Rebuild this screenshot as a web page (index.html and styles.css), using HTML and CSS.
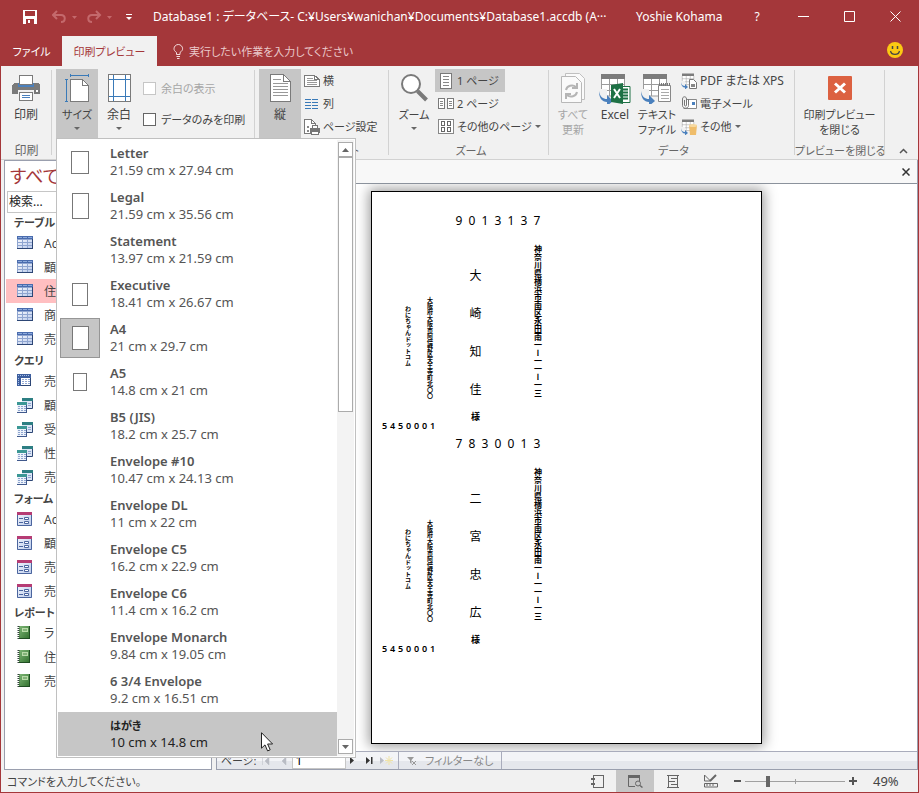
FILE: index.html
```html
<!DOCTYPE html>
<html lang="ja">
<head>
<meta charset="utf-8">
<title>Database1</title>
<link rel="stylesheet" href="styles.css">
</head>
<body>
<svg class="defs" aria-hidden="true">
  <defs>
    <linearGradient id="blue" x1="0" y1="0" x2="1" y2="1"><stop offset="0" stop-color="#f4f7fd"/><stop offset="1" stop-color="#b9c9ea"/></linearGradient>
    <linearGradient id="green" x1="0" y1="0" x2="1" y2="1"><stop offset="0" stop-color="#7fb877"/><stop offset="1" stop-color="#2f6e2c"/></linearGradient>
    <symbol id="table" viewBox="0 0 16 15">
      <rect width="16" height="13" fill="#8fa5d0"/><rect x="0" y="0" width="16" height="3" fill="#4a6cae"/>
      <path d="M1 4h4v2H1zM6 4h4v2H6zM11 4h4v2h-4zM1 7h4v2H1zM6 7h4v2H6zM11 7h4v2h-4zM1 10h4v2H1zM6 10h4v2H6zM11 10h4v2h-4z" fill="url(#blue)"/>
      <path d="M1 1.500h4M6 1.500h4M11 1.500h4" stroke="#8eabdc"/><path d="M0 12.500h16M15.500 3v10" stroke="#2d4675"/>
    </symbol>
    <symbol id="cross" viewBox="0 0 16 15">
      <rect x="0" y="0" width="14" height="12" fill="#fff"/><rect width="14" height="4" fill="#3d5f9f"/><rect width="4" height="12" fill="#3d5f9f"/>
      <path d="M1 1.500h12M1.500 4v7" stroke="#a9c0e8" stroke-dasharray="1 1"/><path d="M5 5.500h8M5 7.500h8M5 9.500h8" stroke="#93a9d4" stroke-dasharray="2 1"/><path d="M4 11.500h10M13.500 4v8" stroke="#2d4675"/>
    </symbol>
    <symbol id="query" viewBox="0 0 16 15">
      <rect x="5" y="0" width="11" height="10" fill="#dce6f6"/><path d="M5 1.500h11" stroke="#2d7f83" stroke-width="3"/><path d="M7 5.500h8M7 7.500h8" stroke="#8ea5cf" stroke-dasharray="3 1"/><path d="M15.500 3v7.500H9" fill="none" stroke="#2d4675"/>
      <rect x="0" y="4" width="10" height="10" fill="#eef3fb"/><path d="M0 5.500h10" stroke="#3b9795" stroke-width="3"/><path d="M1 8.500h8M1 10.500h8M1 12.500h8" stroke="#8ea5cf" stroke-dasharray="2 1"/><path d="M0 14.500h10M9.500 7v7" stroke="#40598c"/>
    </symbol>
    <symbol id="form" viewBox="0 0 16 15">
      <rect width="15" height="14" fill="url(#blue)"/><rect width="15" height="3" fill="#b63c74"/><path d="M.5 3v10.500h14V3" fill="none" stroke="#4b659e"/>
      <path d="M2 6.500h4M2 10.500h4M7.500 5.500h4v2h-4zM7.500 9.500h4v2h-4z" fill="#fff" stroke="#4b659e"/>
    </symbol>
    <symbol id="report" viewBox="0 0 16 15">
      <rect x="2" width="11" height="13" fill="url(#green)"/><path d="M1.500 0v13" stroke="#33433a" stroke-width="2" stroke-dasharray="1 1"/><path d="M12.500 0v13M2 12.500h11" stroke="#1f4d22"/><rect x="5" y="2" width="6" height="4" fill="#b9dba9"/><path d="M6 4h4" stroke="#4f8b4a"/>
    </symbol>
    <symbol id="export" viewBox="0 0 32 32">
      <path d="M2 1h24v5H2z" fill="#7c7c7c"/><path d="M2.500 6v17h23V6M2 11.500h24M2 17.500h24M10.500 6v17M18.500 6v17" fill="#fff" stroke="#9b9b9b"/>
      <path d="M0 16h8v12H0z" fill="#f1f1f1"/><path d="M0 18c1 6 4 8 8 8v-4l6 6-6 5v-4C3 29 0 25 0 18z" fill="#4a80bd"/>
    </symbol>
  </defs>
</svg>

<div class="window">
  <header class="titlebar">
    <div class="quick">
      <button class="plain" aria-label="上書き保存"><svg width="14" height="14" shape-rendering="crispEdges"><path d="M0 0h14v14H0z" fill="#fff"/><path d="M2 1h10v5H2zM3 9h8v5H3z" fill="#a4373a"/><path d="M5 10h2v3H5z" fill="#fff"/></svg></button>
      <button class="plain dim" aria-label="元に戻す"><svg width="26" height="14"><path d="M5 1L1 5l4 4M1.500 5H9c5 0 5 7 0 7" fill="none" stroke="currentColor" stroke-width="2"/><path d="M20 6h5l-2.500 3z" fill="currentColor"/></svg></button>
      <button class="plain dim" aria-label="やり直し"><svg width="26" height="14"><path d="M9 1l4 4-4 4M12.500 5H5c-5 0-5 7 0 7" fill="none" stroke="currentColor" stroke-width="2"/><path d="M20 6h5l-2.500 3z" fill="currentColor"/></svg></button>
      <button class="plain" aria-label="カスタマイズ"><svg width="6" height="8"><path d="M0 1.500h6" stroke="#fff"/><path d="M0 4h6L3 7z" fill="#fff"/></svg></button>
    </div>
    <h1 class="title">Database1 : データベース- C:¥Users¥wanichan¥Documents¥Database1.accdb (A···</h1>
    <span class="user">Yoshie Kohama</span>
    <button class="winbtn">?</button>
    <button class="winbtn" aria-label="最小化"><svg width="11" height="11"><path d="M0 5.500h11" stroke="#fff"/></svg></button>
    <button class="winbtn" aria-label="最大化"><svg width="11" height="11"><path d="M.5.5h10v10H.5z" fill="none" stroke="#fff"/></svg></button>
    <button class="winbtn" aria-label="閉じる"><svg width="11" height="11"><path d="M.5.5l10 10M10.500.5l-10 10" stroke="#fff"/></svg></button>
  </header>

  <nav class="tabs">
    <button class="tab">ファイル</button>
    <button class="tab active">印刷プレビュー</button>
    <button class="tell"><svg width="11" height="15"><path d="M3.500 10.500v-2C1.500 7 1 6 1 4.800a4.300 4.300 0 0 1 8.600 0C9.600 6 9 7 7 8.500v2zM3.500 12.500h3.500M4 14.500h2.500" fill="none" stroke="#f3dcdc"/></svg>実行したい作業を入力してください</button>
    <svg class="smile" width="16" height="16"><circle cx="8" cy="8" r="8" fill="#fbc913"/><path d="M5.500 4v3M10.500 4v3" stroke="#444" stroke-width="1.500"/><path d="M3.500 9c1 4.500 8 4.500 9 0" fill="none" stroke="#444" stroke-width="1.200"/></svg>
  </nav>

  <div class="ribbon">
    <section class="group g-print">
      <div class="gbody">
        <button class="large"><span class="ico"><svg width="28" height="26" shape-rendering="crispEdges"><path d="M2 8h24l2 2v9H0v-9z" fill="#7a7a7a"/><path d="M6 8h16v4H6z" fill="#4a80bd"/><path d="M7.500.5h13v9h-13z" fill="#fff" stroke="#7a7a7a"/><path d="M6 15h16v4H6z" fill="#f1f1f1"/><path d="M7.500 17.500h13v8h-13z" fill="#fff" stroke="#7a7a7a"/><path d="M10 20.500h8M10 22.500h8" stroke="#4a80bd"/><path d="M24 15h2v2h-2z" fill="#fff"/></svg></span>印刷</button>
      </div>
      <div class="glabel">印刷</div>
    </section>

    <section class="group g-size">
      <div class="gbody">
        <div class="drop">
          <button class="large on"><span class="ico"><svg width="25" height="28" shape-rendering="crispEdges"><path d="M6 1.500h18M5.500 0v3M23.500 0v3M1.500 5v22M0 5.500h3M0 27.500h3" stroke="#3a7ab8" fill="none"/><path d="M5.500 5.500h12l6 6v16h-18z" fill="#fff" stroke="#7a7a7a"/><path d="M17.500 5.500v6h6" fill="none" stroke="#7a7a7a"/></svg></span>サイズ<i class="caret"></i></button>
          <div class="menu">
            <ul class="sizes">
              <li><span class="thumb"><i class="sheet letter"></i></span><span><b>Letter</b><br>21.59 cm x 27.94 cm</span></li>
              <li><span class="thumb"><i class="sheet legal"></i></span><span><b>Legal</b><br>21.59 cm x 35.56 cm</span></li>
              <li><span class="thumb"></span><span><b>Statement</b><br>13.97 cm x 21.59 cm</span></li>
              <li><span class="thumb"><i class="sheet exec"></i></span><span><b>Executive</b><br>18.41 cm x 26.67 cm</span></li>
              <li><span class="thumb current"><i class="sheet a4"></i></span><span><b>A4</b><br>21 cm x 29.7 cm</span></li>
              <li><span class="thumb"><i class="sheet a5"></i></span><span><b>A5</b><br>14.8 cm x 21 cm</span></li>
              <li><span class="thumb"></span><span><b>B5 (JIS)</b><br>18.2 cm x 25.7 cm</span></li>
              <li><span class="thumb"></span><span><b>Envelope #10</b><br>10.47 cm x 24.13 cm</span></li>
              <li><span class="thumb"></span><span><b>Envelope DL</b><br>11 cm x 22 cm</span></li>
              <li><span class="thumb"></span><span><b>Envelope C5</b><br>16.2 cm x 22.9 cm</span></li>
              <li><span class="thumb"></span><span><b>Envelope C6</b><br>11.4 cm x 16.2 cm</span></li>
              <li><span class="thumb"></span><span><b>Envelope Monarch</b><br>9.84 cm x 19.05 cm</span></li>
              <li><span class="thumb"></span><span><b>6 3/4 Envelope</b><br>9.2 cm x 16.51 cm</span></li>
              <li class="hover"><span class="thumb"></span><span><b class="kana">はがき</b><br>10 cm x 14.8 cm</span><svg class="cursor" width="13" height="20"><path d="M.5.700v15.500l3.500-3.300 2.600 6 2.600-1.100-2.600-5.800h5z" fill="#fff" stroke="#222"/></svg></li>
            </ul>
            <div class="scroll">
              <span class="arrow"><svg width="7" height="4"><path d="M0 4h7L3.500 0z" fill="#666"/></svg></span>
              <span class="grip"></span>
              <span class="arrow end"><svg width="7" height="4"><path d="M0 0h7L3.500 4z" fill="#666"/></svg></span>
            </div>
          </div>
        </div>
        <button class="large"><span class="ico"><svg width="23" height="28" shape-rendering="crispEdges"><path d="M.5.5h22v27H.5z" fill="#fff" stroke="#7a7a7a"/><path d="M5.500 1v26M17.500 1v26M1 5.500h21M1 22.500h21" stroke="#3a7ab8"/></svg></span>余白<i class="caret"></i></button>
        <div class="checks">
          <label class="off"><input type="checkbox" disabled>余白の表示</label>
          <label><input type="checkbox">データのみを印刷</label>
        </div>
      </div>
    </section>

    <section class="group g-layout">
      <div class="gbody">
        <button class="large on"><span class="ico"><svg width="21" height="28" shape-rendering="crispEdges"><path d="M.5.5h13l7 7v20H.5z" fill="#fff" stroke="#7a7a7a"/><path d="M13.500.5v7h7" fill="none" stroke="#7a7a7a"/><path d="M3 5.500h8M3 9.500h15M3 12.500h15M3 15.500h15M3 18.500h15M3 21.500h15" stroke="#999"/></svg></span>縦</button>
        <div class="rows">
          <button class="small"><svg width="16" height="16" shape-rendering="crispEdges"><path d="M.5 2.500h10l5 4v7H.5z" fill="#fff" stroke="#7a7a7a"/><path d="M10.500 2.500v4h5" fill="none" stroke="#7a7a7a"/><path d="M3 5.500h6M3 7.500h10M3 9.500h10M3 11.500h10" stroke="#999"/></svg>横</button>
          <button class="small"><svg width="16" height="16" shape-rendering="crispEdges"><path d="M1 3.500h6M1 6.500h6M1 9.500h6M1 12.500h6M8 3.500h6M8 6.500h6M8 9.500h6M8 12.500h6" stroke="#3a7ab8"/></svg>列</button>
          <button class="small"><svg width="16" height="16" shape-rendering="crispEdges"><path d="M.5.5h7l4 4v10H.5z" fill="#fff" stroke="#7a7a7a"/><path d="M7.500.5v4h4" fill="none" stroke="#7a7a7a"/><path d="M3 7h2v2H3zM3 11h2v2H3z" fill="#888"/><path d="M6 9h10v5H6zM8 6h6v3H8z" fill="#777"/><path d="M9 7h4v2H9zM8 12h6v3H8z" fill="#fff"/><path d="M7.500 12.500h7v3h-7z" fill="none" stroke="#777"/></svg>ページ設定</button>
        </div>
      </div>
      <div class="glabel">ページ レイアウト</div>
    </section>

    <section class="group g-zoom">
      <div class="gbody">
        <button class="large"><span class="ico"><svg width="28" height="28"><circle cx="11" cy="10" r="9" fill="#fff" stroke="#7a7a7a" stroke-width="2"/><path d="M17.500 17l9 9" stroke="#7a7a7a" stroke-width="4"/></svg></span>ズーム<i class="caret"></i></button>
        <div class="rows">
          <button class="small on"><svg width="16" height="16" shape-rendering="crispEdges"><path d="M2.500.5h11v15h-11z" fill="#fff" stroke="#7a7a7a"/><path d="M5 3.500h6M5 6.500h6M5 9.500h6M5 12.500h6" stroke="#888"/></svg>1 ページ</button>
          <button class="small"><svg width="16" height="16" shape-rendering="crispEdges"><path d="M.5 2.500h6v10h-6zM9.500 2.500h6v10h-6z" fill="#fff" stroke="#7a7a7a"/><path d="M2 5.500h3M2 7.500h3M2 9.500h3M11 5.500h3M11 7.500h3M11 9.500h3" stroke="#888"/></svg>2 ページ</button>
          <button class="small"><svg width="16" height="16" shape-rendering="crispEdges"><path d="M.5.5h15v14H.5z" fill="#fff" stroke="#888"/><path d="M3.500 2.500h3v4h-3zM9.500 2.500h3v4h-3zM3.500 8.500h3v4h-3zM9.500 8.500h3v4h-3z" fill="none" stroke="#666"/></svg>その他のページ<i class="caret"></i></button>
        </div>
      </div>
      <div class="glabel">ズーム</div>
    </section>

    <section class="group g-data">
      <div class="gbody">
        <button class="large off"><span class="ico"><svg width="25" height="31"><path d="M4.500 5V.5h14l5 5v21H20" fill="#fafafa" stroke="#c0c0c0"/><path d="M.5 3.500h14l6 6v20H.5z" fill="#fafafa" stroke="#b8b8b8"/><path d="M5 17a6 5.500 0 0 1 10-3M16 10v5h-5M16 19a6 5.500 0 0 1-10 3M5 26v-5h5" fill="none" stroke="#b5b5b5" stroke-width="2"/></svg></span>すべて<br>更新</button>
        <button class="large"><span class="ico"><svg width="32" height="31"><use href="#export" width="32" height="32"/><path d="M21 13.500h10v16H21z" fill="#fff" stroke="#1e7145"/><path d="M23 16.500h6M23 19.500h6M23 22.500h6M23 25.500h6" stroke="#1e7145" stroke-width="2"/><path d="M12 12l12-2v21l-12-2z" fill="#1e7145"/><path d="M15 16l6 9M21 16l-6 9" stroke="#fff" stroke-width="2"/></svg></span><span class="latin">Excel</span></button>
        <button class="large"><span class="ico"><svg width="32" height="31"><use href="#export" width="32" height="32"/><path d="M17.500 12.500h12v16h-12z" fill="#fff" stroke="#888"/><path d="M20 16.500h8M20 19.500h8M20 22.500h8M20 25.500h8" stroke="#aaa"/><path d="M18 11.500h12" stroke="#777" stroke-width="3" stroke-dasharray="1 1"/></svg></span>テキスト<br>ファイル</button>
        <div class="rows">
          <button class="small latin"><svg width="16" height="16"><use href="#export" width="16" height="16"/><path d="M8.500 6.500h4l3 3v6h-7z" fill="#fff" stroke="#777"/><path d="M10 11h4v3h-4z" fill="#888"/></svg>PDF または XPS</button>
          <button class="small"><svg width="16" height="16"><path d="M5.500 3.500h10v9h-13" fill="#fff" stroke="#888"/><path d="M11 6h3v3h-3z" fill="#4a80bd"/><path d="M3.500 4v5c0 1.500 2 1.500 2 0V3c0-3-4-3-4 0v6.500c0 3.500 6 3.500 6 0V3" fill="none" stroke="#777"/></svg>電子メール</button>
          <button class="small"><svg width="16" height="16"><use href="#export" width="16" height="16"/><path d="M8 6h8l-1 10H9z" fill="#efbd6b"/><ellipse cx="12" cy="6.500" rx="4" ry="1.500" fill="#f7d99f"/></svg>その他<i class="caret"></i></button>
        </div>
      </div>
      <div class="glabel">データ</div>
    </section>

    <section class="group g-close">
      <div class="gbody">
        <button class="large wide"><span class="ico"><svg width="24" height="24"><rect width="24" height="24" rx="1" fill="#dc6141"/><path d="M7 7.500l10 9M17 7.500l-10 9" stroke="#fff" stroke-width="3"/></svg></span>印刷プレビュー<br>を閉じる</button>
      </div>
      <div class="glabel">プレビューを閉じる</div>
    </section>
    <button class="plain collapse" aria-label="リボンを折りたたむ"><svg width="9" height="6"><path d="M1 5l3.500-3.500L8 5" fill="none" stroke="#555" stroke-width="1.500"/></svg></button>
  </div>

  <div class="dock">
    <aside class="objects">
      <h2>すべて</h2>
      <input class="search" type="text" placeholder="検索..." aria-label="検索">
      <h3>テーブル</h3>
      <ul>
        <li><svg><use href="#table"/></svg>Ac</li>
        <li><svg><use href="#table"/></svg>顧</li>
        <li class="picked"><svg><use href="#table"/></svg>住</li>
        <li><svg><use href="#table"/></svg>商</li>
        <li><svg><use href="#table"/></svg>売</li>
      </ul>
      <h3>クエリ</h3>
      <ul>
        <li><svg><use href="#cross"/></svg>売</li>
        <li><svg><use href="#query"/></svg>顧</li>
        <li><svg><use href="#query"/></svg>受</li>
        <li><svg><use href="#query"/></svg>性</li>
        <li><svg><use href="#query"/></svg>売</li>
      </ul>
      <h3>フォーム</h3>
      <ul>
        <li><svg><use href="#form"/></svg>Ac</li>
        <li><svg><use href="#form"/></svg>顧</li>
        <li><svg><use href="#form"/></svg>売</li>
        <li><svg><use href="#form"/></svg>売</li>
      </ul>
      <h3>レポート</h3>
      <ul>
        <li><svg><use href="#report"/></svg>ラ</li>
        <li><svg><use href="#report"/></svg>住</li>
        <li><svg><use href="#report"/></svg>売</li>
      </ul>
    </aside>

    <main class="document">
      <div class="doctabs"><button class="plain" aria-label="閉じる"><svg width="8" height="8"><path d="M.5.5l7 7M7.500.5l-7 7" stroke="#333" stroke-width="1.500"/></svg></button></div>
      <div class="preview">
        <article class="page">
          <section class="card">
            <p class="zip"><span>9</span><span>0</span><span>1</span><span>3</span><span>1</span><span>3</span><span>7</span></p>
            <p class="from">わにちゃんドットコム</p>
            <p class="fromaddr">大阪府大阪市阿倍野区天王寺町北〇〇</p>
            <div class="to"><span>大</span><span>崎</span><span>知</span><span>佳</span><small>様</small></div>
            <p class="toaddr">神奈川県横浜市南区永田南一ー一一ー一三</p>
            <p class="fromzip"><span>5</span><span>4</span><span>5</span><span>0</span><span>0</span><span>0</span><span>1</span></p>
          </section>
          <section class="card">
            <p class="zip"><span>7</span><span>8</span><span>3</span><span>0</span><span>0</span><span>1</span><span>3</span></p>
            <p class="from">わにちゃんドットコム</p>
            <p class="fromaddr">大阪府大阪市阿倍野区天王寺町北〇〇</p>
            <div class="to"><span>二</span><span>宮</span><span>忠</span><span>広</span><small>様</small></div>
            <p class="toaddr">神奈川県横浜市南区永田南一ー一一ー一三</p>
            <p class="fromzip"><span>5</span><span>4</span><span>5</span><span>0</span><span>0</span><span>0</span><span>1</span></p>
          </section>
        </article>
      </div>
      <div class="record">
        <label class="pager">ページ:
          <svg width="30" height="8"><path d="M.5 0v8M7 0v8L3 4zM24 0v8l-4-4z" fill="#b9bcc4" stroke="#b9bcc4" stroke-width=".5"/></svg>
          <input type="text" value="1"></label>
        <svg class="steps" width="44" height="9"><path d="M0 1v7l4-3.500zM16 1v7l4-3.500zM21 1h1.500v7H21z" fill="#333"/><path d="M30 1v7l4-3.500z" fill="#b9bcc4"/><path d="M39 0v9M35 4.500h8M36 1.500l6 6M42 1.500l-6 6" stroke="#f0e3a6"/></svg>
        <span class="filter"><svg width="9" height="9"><path d="M0 1h7L4.500 4v4L3 6.500V4z" fill="#999"/><path d="M5 5l4 4M9 5L5 9" stroke="#999"/></svg>フィルターなし</span>
      </div>
    </main>
  </div>

  <footer class="status">
    <span class="message">コマンドを入力してください。</span>
    <button class="view" aria-label="レポート ビュー"><svg width="13" height="13" shape-rendering="crispEdges"><path d="M2.500.5h10v12h-10z" fill="none" stroke="#666"/><path d="M0 4h4M0 9h4" stroke="#666" stroke-width="2"/></svg></button>
    <button class="view on" aria-label="印刷プレビュー"><svg width="15" height="13"><path d="M0 0h12v3H0z" fill="#666"/><path d="M7 11.500H.5V.5h11V6" fill="none" stroke="#666"/><circle cx="10" cy="8.500" r="2.500" fill="none" stroke="#666"/><path d="M12 10.500l2.500 2" stroke="#666" stroke-width="1.500"/></svg></button>
    <button class="view" aria-label="レイアウト ビュー"><svg width="12" height="13" shape-rendering="crispEdges"><path d="M0 .5h12M0 12.500h12M1.500 0v13M10.500 0v13M4 3.500h7M2 6.500h6M4 9.500h7" stroke="#666"/></svg></button>
    <button class="view" aria-label="デザイン ビュー"><svg width="14" height="14"><path d="M.5 1v6h6zM.5 9.500h13v3.500H.5zM3 10v2M6 10v2M9 10v2" fill="none" stroke="#666"/><path d="M6 7l6-6" stroke="#666" stroke-width="2"/></svg></button>
    <button class="plain sign" aria-label="縮小"><svg width="7" height="8"><path d="M0 4h7" stroke="#555" stroke-width="2"/></svg></button>
    <input class="slider" type="range" min="0" max="100" value="22" aria-label="ズーム">
    <button class="plain sign" aria-label="拡大"><svg width="8" height="8"><path d="M0 4h8M4 0v8" stroke="#555" stroke-width="2"/></svg></button>
    <span class="percent">49%</span>
  </footer>
</div>
</body>
</html>
```
FILE: styles.css
```css
* { box-sizing: border-box; }
body {
  margin: 0;
  font-family: "Noto Sans", "Noto Sans CJK JP", sans-serif;
  font-size: 11px;
  line-height: 15px;
  color: #444;
  font-feature-settings: "palt";
}
h1, h2, h3, p, ul { margin: 0; padding: 0; font-weight: normal; }
ul { list-style: none; }
svg { flex: none; display: block; }
button, input { font: inherit; font-feature-settings: inherit; color: inherit; }
button { border: 0; padding: 0; background: none; }
.plain { display: flex; align-items: center; }
.latin { font-size: 12px; }
.defs { position: absolute; width: 0; height: 0; }

.window {
  display: flex;
  flex-direction: column;
  height: 100vh;
  min-height: 793px;
  background: #f1f1f1;
  border: 1px solid #a4373a;
  border-top: 0;
  overflow: hidden;
}

/* Title bar */
.titlebar { display: flex; align-items: center; height: 36px; padding-bottom: 3px; background: #a4373a; color: #fff; font-size: 12px; }
.quick { display: flex; flex: none; align-items: center; gap: 9px; padding-left: 22px; width: 152px; }
.quick .dim { color: #c4696c; }
.quick .plain:first-child { margin-right: 6px; }
.quick .plain:last-child { margin-left: 4px; }
.title { flex: 1; font-size: 12px; white-space: nowrap; }
.user { width: 100px; padding-left: 2px; white-space: nowrap; }
.winbtn { width: 46px; height: 32px; display: flex; align-items: center; justify-content: center; }

/* Tabs */
.tabs { display: flex; height: 30px; background: #a4373a; color: #fff; padding-right: 15px; }
.tab { width: 61px; white-space: nowrap; }
.tab.active { width: 95px; background: #f1f1f1; color: #a4373a; }
.tell { display: flex; align-items: center; gap: 5px; margin-left: 16px; color: #eac9ca; }
.smile { margin: 6px 0 0 auto; }

/* Ribbon */
.ribbon { display: flex; height: 94px; padding-top: 3px; border-bottom: 1px solid #d2d2d2; position: relative; z-index: 2; }
.group { display: flex; flex: none; flex-direction: column; position: relative; }
.group::after { content: ""; position: absolute; right: 0; top: 1px; bottom: 4px; border-right: 1px solid #d2d2d2; }
.gbody { display: flex; height: 70px; }
.glabel { text-align: center; line-height: 24px; height: 20px; color: #666; white-space: nowrap; }
.g-print { width: 51px; padding: 0 4px; }
.g-print, .g-size .large, .g-layout .large { font-size: 12px; }
.g-size { width: 203px; padding-left: 4px; z-index: 3; }
.g-size .on { font-size: 11px; }
.g-layout { width: 134px; padding-left: 4px; }
.g-layout .glabel { padding-right: 13px; }
.g-zoom { width: 160px; padding-left: 4px; }
.g-data { width: 246px; padding-left: 3px; }
.g-close { width: 90px; }
.large { display: flex; flex: none; flex-direction: column; align-items: center; width: 42px; height: 70px; text-align: center; white-space: nowrap; }
.large.wide { width: 89px; }
.large .ico { height: 38px; display: flex; align-items: center; }
.on { background: #c6c6c6; }
.off { color: #a6a6a6; }
.caret { border: 3px solid transparent; border-top-color: #666; border-bottom: 0; }
.large .caret { margin-top: 5px; }
.small { display: flex; align-items: center; gap: 3px; height: 23px; padding: 0 6px 0 3px; white-space: nowrap; }
.rows { display: flex; flex-direction: column; align-items: flex-start; }
.checks { display: flex; flex-direction: column; padding: 4px 0 0 3px; }
.checks label { display: flex; align-items: center; gap: 5px; height: 31px; white-space: nowrap; }
.checks input { appearance: none; margin: 0; width: 13px; height: 13px; border: 1px solid #666; background: #fff; }
.checks input:disabled { border-color: #c6c6c6; }
.collapse { align-self: flex-end; margin: 0 0 5px 14px; }

/* Paper size menu */
.drop { position: relative; z-index: 5; }
.menu {
  position: absolute;
  top: 69px;
  left: 0;
  width: 300px;
  display: flex;
  padding: 1px;
  border: 1px solid #c0c0c0;
  background: #fff;
  font-size: 13px;
  line-height: 17px;
  color: #555;
}
.sizes { flex: 1; }
.sizes li { display: flex; align-items: center; gap: 10px; height: 44px; padding-left: 2px; position: relative; }
.sizes .hover { background: #c6c6c6; color: #222; }
.sizes b { font-weight: 600; }
.sizes .kana { font-size: 11px; }
.thumb { width: 40px; height: 40px; display: flex; align-items: center; justify-content: center; }
.thumb.current { background: #c6c6c6; border: 1px solid #969696; }
.sheet { background: #fff; border: 1px solid #777; }
.letter { width: 18px; height: 23px; }
.legal { width: 17px; height: 26px; }
.exec { width: 16px; height: 23px; }
.a4 { width: 17px; height: 24px; }
.a5 { width: 14px; height: 18px; }
.cursor { position: absolute; left: 203px; top: 20px; }
.scroll { width: 17px; display: flex; flex-direction: column; padding: 2px 1px; background: #f3f3f3; }
.arrow { height: 15px; display: flex; align-items: center; justify-content: center; border: 1px solid #ababab; background: #fff; }
.grip { height: 255px; border: 1px solid #ababab; background: #fff; }
.arrow.end { margin-top: auto; }

/* Navigation pane */
.dock { flex: 1; display: flex; min-height: 0; }
.objects { width: 208px; margin-left: 3px; background: #fff; border: 1px solid #9a9fae; font-size: 12px; }
.objects h2 { font-size: 18px; line-height: 30px; height: 30px; padding-left: 5px; color: #a4373a; }
.search { display: block; width: 200px; height: 22px; margin-left: 2px; padding: 0 1px 2px; border: 1px solid #c6c6c6; border-radius: 0; }
.search::placeholder { color: #222; }
.objects h3 { font-size: 11px; line-height: 19px; height: 18px; font-weight: 600; padding-left: 9px; }
.objects li { display: flex; align-items: center; gap: 11px; height: 24px; padding-left: 11px; margin-left: 1px; }
.objects li svg { width: 16px; height: 15px; }
.picked { background: #ffbfc1; }

/* Document */
.document { flex: 1; min-width: 0; display: flex; flex-direction: column; margin-left: 4px; border: 1px solid #9a9fae; border-top: 0; }
.doctabs { display: flex; justify-content: flex-end; height: 24px; padding-right: 7px; background: #f8f8f8; border-bottom: 1px solid #8b929c; }
.preview { flex: 1; min-height: 0; display: flex; justify-content: center; align-items: flex-start; padding: 7px 2px 0 0; background: #fff; overflow: hidden; }
.page { width: 391px; height: 553px; padding-top: 17px; border: 1px solid #000; background: #fff; color: #000; font-size: 12px; box-shadow: 0 0 12px 2px #999; font-feature-settings: normal; }
.card { display: grid; grid-template-columns: 20px 24px 68px 56px; grid-template-rows: 24px 187px 12px; justify-content: start; padding-left: 26px; }
.card p, .to { justify-self: center; }
.card .zip { grid-column: 3 / 5; justify-self: start; display: flex; padding-left: 11px; line-height: 24px; }
.zip span { width: 13px; text-align: center; }
.from, .fromaddr, .toaddr { writing-mode: vertical-rl; white-space: nowrap; }
.card .from, .card .fromaddr, .card .toaddr { font-weight: 600; }
.from, .fromaddr { grid-row: 2; font-size: 6px; line-height: 8px; }
.from { padding-top: 73px; grid-column: 1; }
.fromaddr { padding-top: 64px; grid-column: 2; }
.toaddr { padding-top: 12px; grid-column: 4; grid-row: 2; font-size: 8px; line-height: 12px; }
.to { grid-column: 3; grid-row: 2; display: flex; flex-direction: column; align-items: center; padding-top: 24px; line-height: 38px; }
.to small { font-size: 9px; line-height: 16px; font-weight: 600; }
.card .fromzip { grid-column: 1 / 4; grid-row: 3; justify-self: start; display: flex; margin-left: -17px; font-size: 9px; line-height: 12px; font-weight: 600; }
.fromzip span { width: 8px; text-align: center; }

.record { display: flex; align-items: center; height: 18px; border-top: 1px solid #a9acbc; background: linear-gradient(#f3f4f7 50%, #e5e7ec 50%); white-space: nowrap; }
.pager { display: flex; align-items: center; gap: 5px; padding-left: 4px; width: 123px; }
.pager svg { margin-left: auto; }
.pager input { width: 54px; height: 16px; margin-left: -5px; padding: 0 3px; border: 1px solid #c6c6c6; background: #fff; color: #000; font-size: 12px; }
.steps { margin-left: 10px; }
.filter { display: flex; align-items: center; gap: 9px; height: 17px; margin-left: 4px; padding: 0 8px; border: solid #a9acbc; border-width: 0 1px; color: #888; }

/* Status bar */
.status { display: flex; align-items: center; height: 22px; white-space: nowrap; }
.message { flex: 1; padding-left: 6px; }
.view { width: 38px; height: 22px; display: flex; align-items: center; justify-content: center; }
.sign { margin: 0 4px; }
.slider { appearance: none; width: 100px; height: 12px; margin: 0; background: linear-gradient(#a0a0a0, #a0a0a0) 50% 6px / 100% 1px no-repeat, linear-gradient(#a0a0a0, #a0a0a0) 50% 4px / 1px 5px no-repeat; }
.slider::-webkit-slider-thumb { appearance: none; width: 4px; height: 11px; background: #666; }
.percent { width: 57px; padding-left: 12px; font-size: 13px; }
```
